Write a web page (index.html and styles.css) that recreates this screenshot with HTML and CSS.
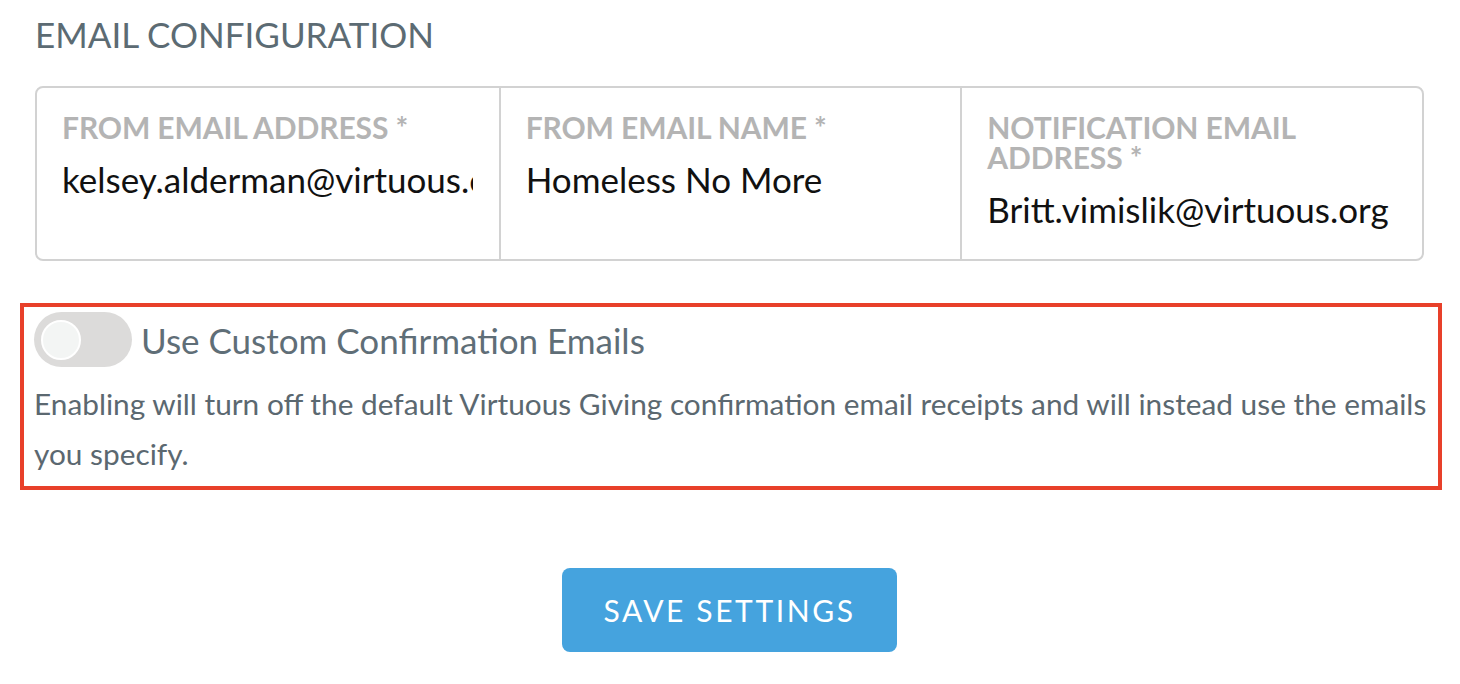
FILE: index.html
```html
<!DOCTYPE html>
<html lang="en">

<head>
    <meta charset="UTF-8">
    <meta name="viewport" content="width=device-width, initial-scale=1.0">
    <title>Email Configuration</title>
    <link rel="stylesheet" href="styles.css">
</head>

<body>
    <div class="page">
        <h2 class="section-title">Email Configuration</h2>

        <div class="field-group">
            <div class="field">
                <label for="from-address">From Email Address *</label>
                <input id="from-address" type="text" value="kelsey.alderman@virtuous.org">
            </div>
            <div class="field">
                <label for="from-name">From Email Name *</label>
                <input id="from-name" type="text" value="Homeless No More">
            </div>
            <div class="field">
                <label for="notify-address">Notification Email Address *</label>
                <input id="notify-address" type="text" value="Britt.vimislik@virtuous.org">
            </div>
        </div>

        <!-- highlighted block -->
        <div class="custom-emails">
            <div class="toggle-row">
                <span class="toggle"><span class="knob"></span></span>
                <span class="toggle-label">Use Custom Confirmation Emails</span>
            </div>
            <p class="help-text">Enabling will turn off the default Virtuous Giving confirmation email receipts and will instead use the emails you specify.</p>
        </div>

        <div class="actions">
            <button class="save-button">Save Settings</button>
        </div>
    </div>
</body>

</html>
```

FILE: styles.css
```css
body {
    margin: 0;
    background: #ffffff;
    font-family: 'Lato', 'Open Sans', sans-serif;
    line-height: 1.2;
}

.page {
    padding: 13px 36px 0 35px;
}

.section-title {
    margin: 0;
    font-size: 35px;
    font-weight: 400;
    line-height: 43px;
    text-transform: uppercase;
    color: #5c6b73;
}

.field-group {
    margin-top: 30px;
    display: grid;
    grid-template-columns: 1fr 1fr 1fr;
    border: 2px solid #d2d2d2;
    border-radius: 8px;
}

.field {
    display: flex;
    flex-direction: column;
    padding: 24px 26px 29px 25px;
    min-width: 0;
}

.field + .field {
    border-left: 2px solid #d2d2d2;
}

.field label {
    font-size: 30px;
    font-weight: 700;
    line-height: 30px;
    text-transform: uppercase;
    color: #b4b4b4;
    letter-spacing: -0.1px;
}

.field input {
    margin-top: 16px;
    padding: 0;
    border: none;
    outline: none;
    width: 100%;
    font-family: 'Lato', 'Open Sans', sans-serif;
    font-size: 35px;
    line-height: 1.2;
    color: #111111;
    background: transparent;
}

.custom-emails {
    margin: 42px -18px 0 -15px;
    padding: 5px 6px 7px 10px;
    border: 4px solid #e8402a;
}

.toggle-row {
    display: flex;
    align-items: center;
    gap: 9px;
}

.toggle {
    width: 98px;
    height: 55px;
    border-radius: 28px;
    background: #dcdbda;
    display: flex;
    align-items: center;
    padding-left: 7px;
    box-sizing: border-box;
}

.knob {
    width: 40px;
    height: 40px;
    border-radius: 50%;
    background: #f3f5f4;
    border: 2px solid #ffffff;
    box-sizing: border-box;
}

.toggle-label {
    font-size: 35px;
    color: #5f6e77;
}

.help-text {
    margin: 12px 0 0;
    font-size: 29.8px;
    line-height: 50px;
    color: #5b6870;
}

.actions {
    display: flex;
    justify-content: center;
    margin-top: 78px;
}

.save-button {
    width: 335px;
    height: 84px;
    border: none;
    border-radius: 8px;
    background: #45a3de;
    color: #ffffff;
    font-family: 'Lato', 'Open Sans', sans-serif;
    font-size: 30px;
    letter-spacing: 2.6px;
    text-transform: uppercase;
    cursor: pointer;
}
```
